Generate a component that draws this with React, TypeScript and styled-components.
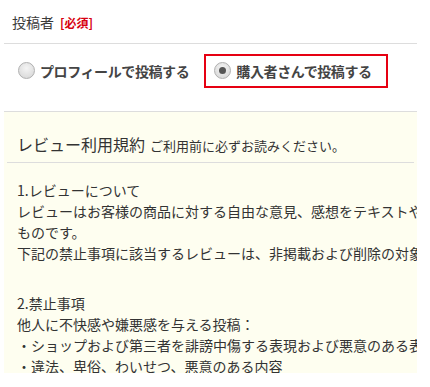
import React from 'react'
import styled, { createGlobalStyle } from 'styled-components'

const GlobalStyle = createGlobalStyle`
  body {
    margin: 0;
    background: #ffffff;
    font-family: "Noto Sans CJK JP", "Noto Sans", sans-serif;
    color: #333333;
  }
`

const App: React.FC = () => {
  return (
    <Page>
      <GlobalStyle />
      <Header>
        <Label>投稿者</Label>
        <Required>[必須]</Required>
      </Header>
      <RadioRow>
        <RadioOption>
          <RadioDot />
          <RadioText>プロフィールで投稿する</RadioText>
        </RadioOption>
        <RadioOption selected>
          <RadioDot selected />
          <RadioText>購入者さんで投稿する</RadioText>
        </RadioOption>
      </RadioRow>
      <TermsBox>
        <TermsHead>
          <TermsTitle>レビュー利用規約</TermsTitle>
          <TermsNote>ご利用前に必ずお読みください。</TermsNote>
        </TermsHead>
        <TermsBody>
          <Section>
            <Line>1.レビューについて</Line>
            <Line>レビューはお客様の商品に対する自由な意見、感想をテキストや</Line>
            <Line>ものです。</Line>
            <Line>下記の禁止事項に該当するレビューは、非掲載および削除の対象</Line>
          </Section>
          <Section>
            <Line>2.禁止事項</Line>
            <Line>他人に不快感や嫌悪感を与える投稿：</Line>
            <Line>・ショップおよび第三者を誹謗中傷する表現および悪意のある表</Line>
            <Line>・違法、卑俗、わいせつ、悪意のある内容</Line>
          </Section>
        </TermsBody>
      </TermsBox>
    </Page>
  )
}

const Page = styled.div`
  width: 413px;
  margin-left: 4px;
  height: 387px;
  overflow: hidden;
`

const Header = styled.div`
  display: flex;
  align-items: center;
  gap: 6px;
  height: 44px;
  padding-left: 8px;
  padding-top: 1px;
  border-bottom: 1px solid #dddddd;
  box-sizing: border-box;
`

const Label = styled.span`
  font-size: 14px;
  color: #3a3a3a;
`

const Required = styled.span`
  font-size: 12px;
  font-weight: bold;
  color: #d7000f;
`

const RadioRow = styled.div`
  display: flex;
  align-items: center;
  gap: 13px;
  height: 67px;
  padding-left: 9px;
  padding-bottom: 14px;
  box-sizing: border-box;
`

const RadioOption = styled.div<{ selected?: boolean }>`
  display: flex;
  align-items: center;
  gap: 5px;
  height: 34px;
  box-sizing: border-box;
  padding: 0 0 0 ${p => (p.selected ? '8px' : '3px')};
  border: ${p => (p.selected ? '2px solid #e60012' : '2px solid transparent')};
  width: ${p => (p.selected ? '184px' : 'auto')};
`

const RadioDot = styled.span<{ selected?: boolean }>`
  position: relative;
  width: 17px;
  height: 17px;
  border-radius: 50%;
  box-sizing: border-box;
  border: 1px solid #b0b0b0;
  background: radial-gradient(circle at 50% 35%, #f4f4f4, #d4d4d4);
  flex-shrink: 0;
  &::after {
    content: '';
    display: ${p => (p.selected ? 'block' : 'none')};
    position: absolute;
    left: 4px;
    top: 4px;
    width: 7px;
    height: 7px;
    border-radius: 50%;
    background: #555555;
  }
`

const RadioText = styled.span`
  font-size: 14px;
  font-weight: 700;
  letter-spacing: -0.4px;
  color: #444444;
  white-space: nowrap;
`

const TermsBox = styled.div`
  background: #fefef0;
  border-top: 1px solid #dddddd;
  height: 261px;
  overflow: hidden;
`

const TermsHead = styled.div`
  display: flex;
  align-items: baseline;
  gap: 5px;
  height: 51px;
  padding: 20px 0 0 10px;
  box-sizing: border-box;
  margin: 0 3px;
  border-bottom: 1px solid #dddddd;
`

const TermsTitle = styled.span`
  font-size: 16px;
  color: #333333;
`

const TermsNote = styled.span`
  font-size: 13px;
  color: #333333;
`

const TermsBody = styled.div`
  padding: 17px 0 0 13px;
`

const Section = styled.div`
  & + & {
    margin-top: 29px;
  }
`

const Line = styled.div`
  font-size: 14px;
  line-height: 21px;
  white-space: nowrap;
  color: #333333;
`

export default App
